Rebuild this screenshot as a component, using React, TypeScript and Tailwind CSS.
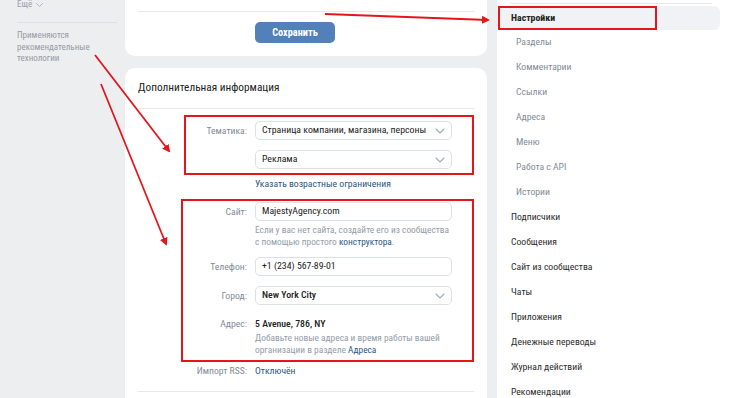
import React from 'react';

const Chevron = () => (
  <svg width="10" height="6" viewBox="0 0 10 6" fill="none" stroke="#a3adb8" strokeWidth="1.1" strokeLinecap="round" strokeLinejoin="round">
    <path d="M1 1l4 4 4-4" />
  </svg>
);

const Field: React.FC<{ value: string; select?: boolean; bold?: boolean }> = ({ value, select, bold }) => (
  <div className="w-[197px] h-[19px] border border-[#dce1e6] rounded-[5px] bg-white flex items-center justify-between pl-[6px] pr-[6px]">
    <span className={`text-[9.8px] text-[#222] ${bold ? 'font-medium' : ''}`}>{value}</span>
    {select && <Chevron />}
  </div>
);

const Row: React.FC<{ label?: string; lw: number; children: React.ReactNode; className?: string }> = ({ label, lw, children, className }) => (
  <div className={`flex items-start ${className || ''}`}>
    <div className="text-right text-[9.7px] text-[#818c99] shrink-0 leading-[19px]" style={{ width: lw }}>{label}</div>
    <div className="ml-[8px]">{children}</div>
  </div>
);

const subItems = ['Разделы', 'Комментарии', 'Ссылки', 'Адреса', 'Меню', 'Работа с API', 'Истории'];
const mainItems = ['Подписчики', 'Сообщения', 'Сайт из сообщества', 'Чаты', 'Приложения', 'Денежные переводы', 'Журнал действий', 'Рекомендации'];

export default function App() {
  return (
    <div className="relative w-[730px] h-[398px] overflow-hidden bg-[#edeef0] flex [font-family:Roboto,'Noto_Sans',sans-serif] [font-stretch:condensed]">
      {/* left menu */}
      <div className="w-[125px] shrink-0 pl-[17px] pr-[8px]">
        <div className="flex items-center gap-[4px] h-[10px] text-[9px] text-[#99a2ad]">
          Ещё
          <svg width="7" height="4" viewBox="0 0 7 4" fill="none" stroke="#aeb7c2" strokeWidth="1" strokeLinecap="round"><path d="M.5.5l3 3 3-3" /></svg>
        </div>
        <div className="mt-[12px] border-t border-[#dce1e6]" />
        <div className="mt-[7px] text-[9px] leading-[11.5px] text-[#939ca6]">
          Применяются<br />рекомендательные<br />технологии
        </div>
      </div>

      {/* main column */}
      <div className="w-[362px] shrink-0 flex flex-col gap-[12px]">
        <div className="bg-white rounded-b-[10px] px-[13px] pt-[11px] pb-[13px]">
          <div className="border-t border-[#e7e8ec]" />
          <div className="flex pl-[117px] pt-[10px]">
            <button className="w-[80px] h-[21px] rounded-[5px] bg-[#5181b8] text-white text-[10.3px] font-bold">Сохранить</button>
          </div>
        </div>

        <div className="bg-white rounded-t-[10px] flex-1">
          <div className="h-[40px] flex items-center px-[13px] text-[11.3px] text-[#222]">Дополнительная информация</div>
          <div className="mx-[13px] border-t border-[#e7e8ec]" />

          <div className="mt-[6px] ml-[59px] mr-[13px] border-2 border-[#e3161c] pt-[4px] pb-[4px]">
            <Row label="Тематика:" lw={61}>
              <Field value="Страница компании, магазина, персоны" select />
            </Row>
            <Row lw={61} className="mt-[10px]">
              <Field value="Реклама" select />
            </Row>
          </div>

          <Row lw={122} className="mt-[2px]">
            <div className="text-[9.7px] leading-[14px] text-[#2a5885]">Указать возрастные ограничения</div>
          </Row>

          <div className="mt-[8px] ml-[56px] mr-[13px] border-2 border-[#e3161c] pt-[1px] pb-[4px]">
            <Row label="Сайт:" lw={64}>
              <Field value="MajestyAgency.com" />
              <div className="mt-[3px] text-[9.4px] leading-[12px] text-[#939ca6] whitespace-nowrap">
                <div>Если у вас нет сайта, создайте его из сообщества</div>
                <div>с помощью простого <span className="text-[#2a5885]">конструктора</span>.</div>
              </div>
            </Row>
            <Row label="Телефон:" lw={64} className="mt-[9px]">
              <Field value="+1 (234) 567-89-01" />
            </Row>
            <Row label="Город:" lw={64} className="mt-[10px]">
              <Field value="New York City" select bold />
            </Row>
            <div className="flex items-start mt-[12px]">
              <div className="w-[64px] text-right text-[9.7px] leading-[14px] text-[#818c99]">Адрес:</div>
              <div className="ml-[8px]">
                <div className="text-[9.8px] leading-[14px] text-[#222] font-medium">5 Avenue, 786, NY</div>
                <div className="mt-[1px] text-[9.4px] leading-[12px] text-[#939ca6] whitespace-nowrap">
                  <div>Добавьте новые адреса и время работы вашей</div>
                  <div>организации в разделе <span className="text-[#2a5885]">Адреса</span></div>
                </div>
              </div>
            </div>
          </div>

          <div className="flex items-start mt-[2px]">
            <div className="w-[122px] text-right text-[9.7px] leading-[14px] text-[#818c99]">Импорт RSS:</div>
            <div className="ml-[8px] text-[9.7px] leading-[14px] text-[#2a5885]">Отключён</div>
          </div>
          <div className="mt-[13px] mx-[13px] border-t border-[#e7e8ec]" />
        </div>
      </div>

      {/* right menu */}
      <div className="ml-[10px] flex-1 bg-white pt-[3px]">
        <div className="ml-[13px] mr-[18px] border-t border-[#e7e8ec]" />
        <div className="mt-[2px] relative h-[24px] mr-[10px] rounded-[6px] bg-[#f0f2f5] flex items-center pl-[14px] text-[9.8px] font-bold text-[#222]">
          Настройки
          <div className="absolute left-[1px] top-0 w-[159px] h-[24px] border-2 border-[#e3161c]" />
        </div>
        {subItems.map(s => (
          <div key={s} className="h-[25px] flex items-center pl-[19px] text-[9.7px] text-[#818c99]">{s}</div>
        ))}
        {mainItems.map(s => (
          <div key={s} className="h-[25px] flex items-center pl-[14px] text-[9.7px] text-[#2c2d2e]">{s}</div>
        ))}
      </div>

      {/* annotation arrows */}
      <svg className="absolute inset-0 pointer-events-none" width="730" height="398" viewBox="0 0 730 398">
        <defs>
          <marker id="ah" markerWidth="8" markerHeight="8" refX="6" refY="4" orient="auto" markerUnits="userSpaceOnUse">
            <path d="M0 0L8 4L0 8z" fill="#e3161c" />
          </marker>
        </defs>
        <line x1="325" y1="14" x2="488" y2="20" stroke="#e3161c" strokeWidth="1.8" markerEnd="url(#ah)" />
        <line x1="95" y1="55" x2="169" y2="151" stroke="#e3161c" strokeWidth="1.8" markerEnd="url(#ah)" />
        <line x1="101" y1="84" x2="166" y2="244" stroke="#e3161c" strokeWidth="1.8" markerEnd="url(#ah)" />
      </svg>
    </div>
  );
}
